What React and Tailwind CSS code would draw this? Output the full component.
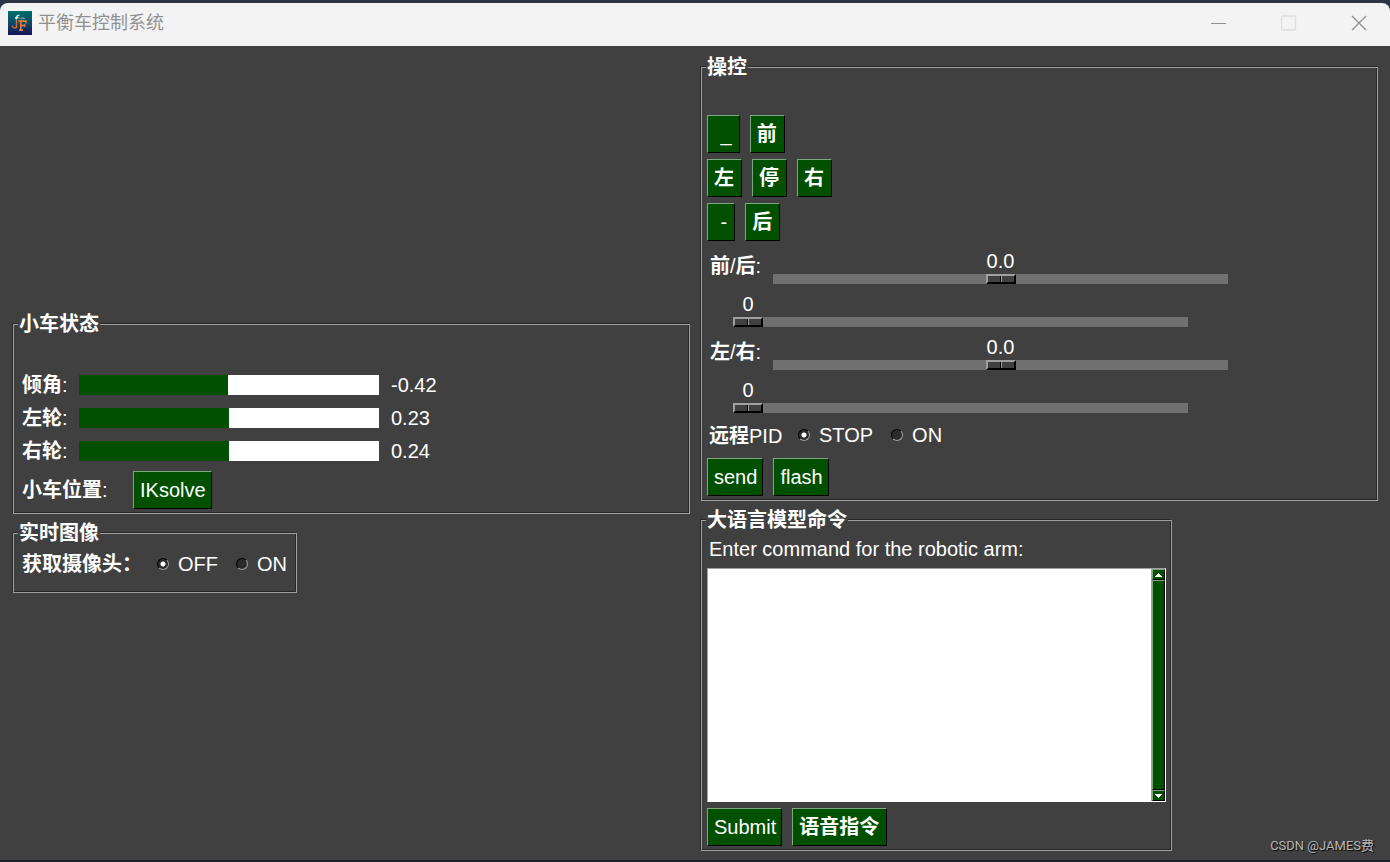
import { useId, useState } from "react";

function Group({ title, className = "", children }) {
  return (
    <fieldset
      className={`min-w-0 border border-[#a0a0a0] px-[5px] pb-1 shadow-[-1px_-1px_0_#272727,inset_-1px_-1px_0_#272727] ${className}`}
    >
      <legend className="-ml-px bg-[#404040] px-px font-bold leading-[21px]">{title}</legend>
      {children}
    </fieldset>
  );
}

const buttonKinds = {
  word: "pl-[6px] pr-[5px]",
  glyph: "pl-[6px] pr-[7px] font-bold",
  mark: "px-[7px]",
};

function Btn({ children, kind = "word" }) {
  return (
    <button
      type="button"
      className={`h-[38px] whitespace-pre border border-b-black border-l-[#7fa77f] border-r-black border-t-[#7fa77f] bg-[#005000] leading-6 ${buttonKinds[kind]}`}
    >
      {children}
    </button>
  );
}

function Gauge({ label, value, ratio }) {
  return (
    <div className="flex h-5 items-center">
      <span className="w-[60px] pl-[3px]">
        <b>{label}</b>:
      </span>
      <div
        role="progressbar"
        aria-label={label}
        aria-valuenow={Math.round(ratio * 100)}
        className="h-5 w-[300px] bg-white"
      >
        <div className="h-5 bg-[#005000]" style={{ width: `${ratio * 100}%` }} />
      </div>
      <span className="pl-3">{value}</span>
    </div>
  );
}

function Scale({ label, name, min, max, initial, digits }) {
  const [value, setValue] = useState(initial);
  const ratio = (value - min) / (max - min);
  return (
    <div className="w-[455px] pb-[6px] pt-[2px]">
      <output
        className="block w-[30px] text-center leading-[25px]"
        style={{ marginLeft: `calc((100% - 30px) * ${ratio})` }}
      >
        {value.toFixed(digits)}
      </output>
      <input
        id={name}
        type="range"
        aria-label={label}
        min={min}
        max={max}
        step={digits ? 0.1 : 1}
        value={value}
        onChange={(e) => setValue(Number(e.target.value))}
        className="block h-[10px] w-full appearance-none bg-[#707070] [&::-webkit-slider-thumb]:h-[10px] [&::-webkit-slider-thumb]:w-[30px] [&::-webkit-slider-thumb]:appearance-none [&::-webkit-slider-thumb]:border-2 [&::-webkit-slider-thumb]:border-b-black [&::-webkit-slider-thumb]:border-l-[#a0a0a0] [&::-webkit-slider-thumb]:border-r-black [&::-webkit-slider-thumb]:border-t-[#a0a0a0] [&::-webkit-slider-thumb]:bg-[linear-gradient(90deg,#404040_12px,#000_12px,#000_13px,#a0a0a0_13px,#a0a0a0_14px,#404040_14px)]"
      />
    </div>
  );
}

function Radio({ name, label, defaultChecked }) {
  const id = useId();
  return (
    <div className="flex items-center gap-[9px]">
      <input
        id={id}
        type="radio"
        name={name}
        defaultChecked={defaultChecked}
        className="size-3 appearance-none rounded-full border border-b-[#a0a0a0] border-l-black border-r-[#a0a0a0] border-t-black bg-[#2b2b2b] checked:bg-[radial-gradient(circle,#fff_2px,#2b2b2b_3px)]"
      />
      <label htmlFor={id}>{label}</label>
    </div>
  );
}

function ScrollArrow({ down = false }) {
  return (
    <button
      type="button"
      aria-label={down ? "向下滚动" : "向上滚动"}
      className="flex h-[11px] items-center justify-center border border-b-black border-l-[#7fa77f] border-r-black border-t-[#7fa77f] bg-[#005000]"
    >
      <svg width="7" height="4" viewBox="0 0 7 4" shapeRendering="crispEdges" fill="#fff">
        {down ? <path d="M0 0h7v1h-1v1h-1v1h-1v1h-1v-1h-1v-1h-1v-1h-1z" /> : <path d="M0 4h7v-1h-1v-1h-1v-1h-1v-1h-1v1h-1v1h-1v1h-1z" />}
      </svg>
    </button>
  );
}

function TitleBar() {
  return (
    <header className="flex h-[43px] items-center rounded-t-lg bg-[#f3f3f3] pb-[3px] pl-2 pr-[23px] text-[#909090]">
      <svg width="24" height="24" viewBox="0 0 24 24">
        <defs>
          <linearGradient id="logo-bg" x1="0" y1="0" x2="0" y2="1">
            <stop offset="0" stopColor="#00706a" />
            <stop offset="0.5" stopColor="#0c4a64" />
            <stop offset="1" stopColor="#1a1458" />
          </linearGradient>
        </defs>
        <rect width="24" height="24" fill="url(#logo-bg)" />
        <path d="M11.500 4.500Q8.500 3.500 8.200 8.500M7 6.800h3.500" stroke="#d5ebe8" strokeWidth="1.4" fill="none" />
        <path d="M11 7.500l5-1M13 8l4-0.500" stroke="#7c8f86" strokeWidth="1" fill="none" />
        <path d="M8.500 9v7q-0.500 1.500-3 0.500M4.500 14.500v2" stroke="#cf6f3a" strokeWidth="1.5" fill="none" />
        <path d="M10.500 10.200h7.500v2M12.800 10v9.500M11 19.200h4M13 14.500h4M16.500 13v3" stroke="#e07b3c" strokeWidth="1.7" fill="none" />
      </svg>
      <h1 className="pl-[6px] text-[18px]">平衡车控制系统</h1>
      <div className="ml-auto flex items-center gap-[54px]">
        <button type="button" aria-label="最小化">
          <svg width="16" height="16" viewBox="0 0 16 16" className="block" fill="none" stroke="currentColor"><path d="M0 8.500h15" /></svg>
        </button>
        <button type="button" aria-label="最大化" disabled>
          <svg width="16" height="16" viewBox="0 0 16 16" className="block" fill="none" stroke="#dedede"><rect x="0.500" y="1" width="14" height="14" rx="1" strokeWidth="1.3" /></svg>
        </button>
        <button type="button" aria-label="关闭">
          <svg width="16" height="16" viewBox="0 0 16 16" className="block" fill="none" stroke="currentColor" strokeWidth="1.3"><path d="M1 1l14 14M15 1L1 15" /></svg>
        </button>
      </div>
    </header>
  );
}

export default function App() {
  return (
    <div className="relative flex min-h-screen flex-col border-b-2 border-t-[3px] border-b-[#1a222c] border-t-[#2b3642] bg-[#2b3642] font-['Liberation_Sans','Noto_Sans_CJK_SC',sans-serif] text-[20px] leading-6 text-white">
      <TitleBar />
      <main className="grid flex-1 grid-cols-2 items-start gap-[11px] bg-[#404040] pb-2 pl-[13px] pr-3 pt-[11px]">
        <div className="flex flex-col gap-[9px] self-center pb-[3px]">
          <Group title="小车状态">
            <div className="flex flex-col gap-[13px] pt-10">
              <Gauge label="倾角" value="-0.42" ratio={0.497} />
              <Gauge label="左轮" value="0.23" ratio={0.5} />
              <Gauge label="右轮" value="0.24" ratio={0.5} />
            </div>
            <div className="flex items-center pt-[10px]">
              <span className="w-[114px] pl-[3px]">
                <b>小车位置</b>:
              </span>
              <Btn>IKsolve</Btn>
            </div>
          </Group>
          <Group title="实时图像" className="w-fit">
            <div className="flex h-11 items-start pr-1 pt-2">
              <b className="w-[138px] pl-[3px]">获取摄像头：</b>
              <div className="flex gap-[18px]">
                <Radio name="camera" label="OFF" defaultChecked />
                <Radio name="camera" label="ON" />
              </div>
            </div>
          </Group>
        </div>

        <div className="flex flex-col gap-[9px]">
          <Group title="操控">
            <div className="flex flex-col gap-[6px] pt-[37px]">
              <div className="flex gap-[10px]">
                <Btn kind="mark">{" _"}</Btn>
                <Btn kind="glyph">前</Btn>
              </div>
              <div className="flex gap-[10px]">
                <Btn kind="glyph">左</Btn>
                <Btn kind="glyph">停</Btn>
                <Btn kind="glyph">右</Btn>
              </div>
              <div className="flex gap-[10px]">
                <Btn kind="mark">{" -"}</Btn>
                <Btn kind="glyph">后</Btn>
              </div>
            </div>
            <div className="pt-[6px]">
              <div className="flex items-center">
                <label htmlFor="drive" className="w-[66px] pb-[5px] pl-[3px]">
                  <b>前</b>/<b>后</b>:
                </label>
                <Scale name="drive" label="前/后" min={-10} max={10} initial={0} digits={1} />
              </div>
              <div className="pl-[26px]">
                <Scale name="drive-step" label="前/后档位" min={0} max={100} initial={0} digits={0} />
              </div>
              <div className="flex items-center">
                <label htmlFor="turn" className="w-[66px] pb-[5px] pl-[3px]">
                  <b>左</b>/<b>右</b>:
                </label>
                <Scale name="turn" label="左/右" min={-10} max={10} initial={0} digits={1} />
              </div>
              <div className="pl-[26px]">
                <Scale name="turn-step" label="左/右档位" min={0} max={100} initial={0} digits={0} />
              </div>
            </div>
            <div className="flex h-[33px] items-center">
              <span className="w-[91px] pl-[2px]">
                <b>远程</b>PID
              </span>
              <div className="flex gap-[18px] pb-[2px]">
                <Radio name="pid" label="STOP" defaultChecked />
                <Radio name="pid" label="ON" />
              </div>
            </div>
            <div className="flex gap-[10px] pt-[6px]">
              <Btn>send</Btn>
              <Btn>flash</Btn>
            </div>
          </Group>

          <Group title="大语言模型命令" className="w-fit">
            <label htmlFor="command" className="block pb-[7px] pl-[2px] pt-[6px]">
              Enter command for the robotic arm:
            </label>
            <div className="flex h-[234px] border border-[#a0a0a0] border-r-white border-b-white">
              <textarea id="command" className="w-[443px] resize-none bg-white px-1 text-black outline-none" />
              <div className="flex w-[14px] flex-col border-l border-[#a0a0a0] bg-[#005000]">
                <ScrollArrow />
                <div className="flex-1 border border-b-black border-l-[#7fa77f] border-r-black border-t-[#7fa77f]" />
                <ScrollArrow down />
              </div>
            </div>
            <div className="flex gap-[10px] pt-[6px]">
              <Btn>Submit</Btn>
              <Btn kind="glyph">语音指令</Btn>
            </div>
          </Group>
        </div>
      </main>
      <p className="absolute bottom-[2px] right-4 font-[Roboto,'Noto_Sans_CJK_SC',sans-serif] text-[13px] text-[#b8b8b8] [text-shadow:1px_1px_1px_#000]">CSDN @JAMES费</p>
    </div>
  );
}
